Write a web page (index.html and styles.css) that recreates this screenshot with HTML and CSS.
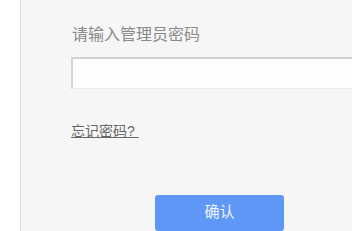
FILE: index.html
```html
<!DOCTYPE html>
<html>
<head>
<meta charset="utf-8">
<link rel="stylesheet" href="styles.css">
</head>
<body>
<div class="side"></div>
<div class="panel">
  <div class="label">请输入管理员密码</div>
  <div class="input"></div>
  <a class="forgot">忘记密码?&nbsp;</a>
  <div class="btn-row"><div class="btn">确认</div></div>
</div>
</body>
</html>
```
FILE: styles.css
```css
html, body {
  margin: 0;
  padding: 0;
  width: 352px;
  height: 231px;
  overflow: hidden;
  background: #ffffff;
  font-family: "Liberation Sans", "Noto Sans CJK SC", sans-serif;
}
body {
  display: flex;
}
.side {
  width: 20px;
  flex: none;
  background: #ffffff;
}
.panel {
  flex: 1;
  background: #f6f6f6;
  border-left: 1px solid #dcdcdc;
  padding: 25px 0 0 50px;
  display: flex;
  flex-direction: column;
  align-items: flex-start;
  overflow: hidden;
}
.label {
  font-size: 16px;
  line-height: 20px;
  color: #8a8a8a;
  margin-left: 1px;
}
.input {
  align-self: stretch;
  margin-top: 12px;
  height: 30px;
  background: #fdfdfd;
  border-top: 2px solid #d2d2d2;
  border-left: 2px solid #d6d6d6;
  border-bottom: 1px solid #ececec;
}
.forgot {
  margin-top: 33px;
  font-size: 14px;
  line-height: 18px;
  color: #666666;
  text-decoration: underline;
}
.btn-row {
  margin-top: 55px;
  padding-left: 84px;
}
.btn {
  width: 129px;
  height: 36px;
  background: #5e97f6;
  border-radius: 3px;
  color: #f2f6ff;
  font-size: 15px;
  line-height: 34px;
  text-align: center;
}
```
